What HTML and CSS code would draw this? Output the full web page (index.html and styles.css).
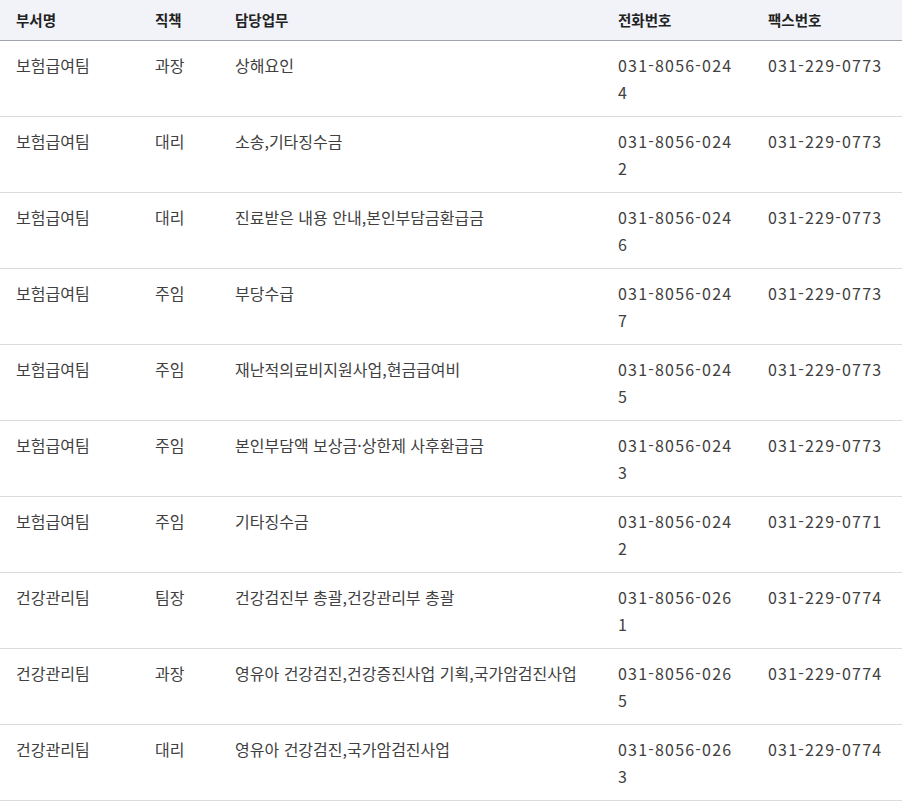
FILE: index.html
```html
<!DOCTYPE html>
<html lang="ko">
<head>
<meta charset="utf-8">
<title>담당자 안내</title>
<link rel="stylesheet" href="styles.css">
</head>
<body>
<table class="staff">
  <colgroup>
    <col class="c-dept"><col class="c-rank"><col class="c-task"><col class="c-tel"><col class="c-fax">
  </colgroup>
  <thead>
    <tr><th>부서명</th><th>직책</th><th>담당업무</th><th>전화번호</th><th>팩스번호</th></tr>
  </thead>
  <tbody>
    <tr><td>보험급여팀</td><td>과장</td><td>상해요인</td><td class="num">031-8056-0244</td><td class="num">031-229-0773</td></tr>
    <tr><td>보험급여팀</td><td>대리</td><td>소송,기타징수금</td><td class="num">031-8056-0242</td><td class="num">031-229-0773</td></tr>
    <tr><td>보험급여팀</td><td>대리</td><td>진료받은 내용 안내,본인부담금환급금</td><td class="num">031-8056-0246</td><td class="num">031-229-0773</td></tr>
    <tr><td>보험급여팀</td><td>주임</td><td>부당수급</td><td class="num">031-8056-0247</td><td class="num">031-229-0773</td></tr>
    <tr><td>보험급여팀</td><td>주임</td><td>재난적의료비지원사업,현금급여비</td><td class="num">031-8056-0245</td><td class="num">031-229-0773</td></tr>
    <tr><td>보험급여팀</td><td>주임</td><td>본인부담액 보상금·상한제 사후환급금</td><td class="num">031-8056-0243</td><td class="num">031-229-0773</td></tr>
    <tr><td>보험급여팀</td><td>주임</td><td>기타징수금</td><td class="num">031-8056-0242</td><td class="num">031-229-0771</td></tr>
    <tr><td>건강관리팀</td><td>팀장</td><td>건강검진부 총괄,건강관리부 총괄</td><td class="num">031-8056-0261</td><td class="num">031-229-0774</td></tr>
    <tr><td>건강관리팀</td><td>과장</td><td>영유아 건강검진,건강증진사업 기획,국가암검진사업</td><td class="num">031-8056-0265</td><td class="num">031-229-0774</td></tr>
    <tr><td>건강관리팀</td><td>대리</td><td>영유아 건강검진,국가암검진사업</td><td class="num">031-8056-0263</td><td class="num">031-229-0774</td></tr>
  </tbody>
</table>
</body>
</html>
```
FILE: styles.css
```css
html, body {
  margin: 0;
  padding: 0;
  background: #ffffff;
}
body {
  font-family: "Noto Sans CJK KR", "Noto Sans", sans-serif;
  color: #404040;
}
.staff {
  width: 902px;
  border-collapse: collapse;
  table-layout: fixed;
}
.c-dept { width: 139px; }
.c-rank { width: 80px; }
.c-task { width: 383px; }
.c-tel { width: 150px; }
.c-fax { width: 150px; }
.staff th {
  background: #f1f3f8;
  border-bottom: 1px solid #a0a4b0;
  height: 40px;
  padding: 0 16px;
  box-sizing: border-box;
  text-align: left;
  font-size: 14.5px;
  font-weight: 700;
  color: #222;
}
.staff td {
  height: 76px;
  box-sizing: border-box;
  padding: 11px 16px 10px;
  vertical-align: top;
  font-size: 16px;
  line-height: 27px;
  border-bottom: 1px solid #dcdcdc;
  word-break: break-all;
}
.staff td.num {
  letter-spacing: 1.2px;
}
```
